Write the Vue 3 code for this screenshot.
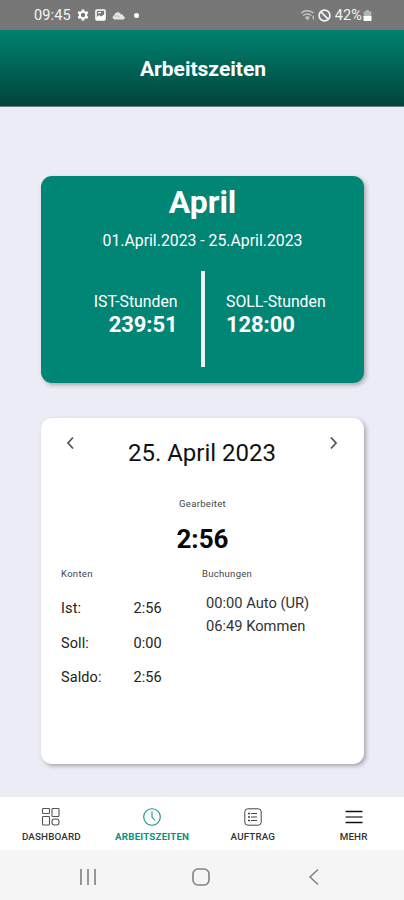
<script setup>
const accounts = [
  { label: 'Ist:', value: '2:56' },
  { label: 'Soll:', value: '0:00' },
  { label: 'Saldo:', value: '2:56' },
]
const bookings = ['00:00 Auto (UR)', '06:49 Kommen']
</script>

<template>
  <div class="screen">
    <div class="status">
      <div class="status-left">
        <span class="time">09:45</span>
        <svg class="gear" width="12" height="12" viewBox="0 0 24 24" fill="#fff"><path fill-rule="evenodd" d="M9.5 1h5l.6 3.2 2 1.2 3.1-1.2 2.5 4.3-2.5 2.1v2.8l2.5 2.1-2.5 4.3-3.1-1.2-2 1.2-.6 3.2h-5l-.6-3.2-2-1.2-3.1 1.2-2.5-4.3 2.5-2.1v-2.8L1.300 8.500l2.500-4.300 3.100 1.200 2-1.200zM12 7.600a4.400 4.400 0 1 0 0 8.800 4.400 4.400 0 0 0 0-8.800z" /></svg>
        <svg class="photo" width="11" height="12" viewBox="0 0 11 12"><rect x="1" y="1" width="9" height="10" rx="1" fill="none" stroke="#fff" stroke-width="1.600" /><path d="M1 9l3-3 2 1.500L10 5v6H1z" fill="#fff" /><path d="M3 3.700h3" stroke="#fff" stroke-width="1.200" /></svg>
        <svg class="cloud" width="13" height="9" viewBox="0 0 13 9"><path d="M3 8.500C.2 8.500-.2 5 2.200 4.500 2.500 1 7.200-.2 8.900 3.300c1.500-.3 2.300.5 2.400 1.600 2.100.3 1.900 3.600-.3 3.600z" fill="#e3e3e3" /><path d="M2.500 5.500c2-1.200 3.500-.6 5 .6" fill="none" stroke="#aaa" stroke-width=".7" /></svg>
        <span class="dot"></span>
      </div>
      <div class="status-right">
        <svg width="16" height="13" viewBox="0 0 16 13"><g fill="none" stroke="#c5c5c5" stroke-width="1.400"><path d="M1 4Q7 -.5 13.500 4M3 6.500q4.300-3 8.500 0M5.300 8.700q2-1.500 4 0" /></g><path d="M5 8.500h5l-2.500 3zM12 8l2-2v6z" fill="#bbb" /></svg>
        <svg class="block" width="13" height="13" viewBox="0 0 13 13" fill="none" stroke="#f4f4f4" stroke-width="1.700"><circle cx="6.500" cy="6.500" r="5.400" /><path d="M2.900 2.900l7.200 7.200" /></svg>
        <span class="percent">42%</span>
        <svg class="battery" width="9" height="13" viewBox="0 0 9 13"><path d="M3 1h3v1.500h2.300V6H.7V2.500H3z" fill="#b5b5b5" /><rect x=".5" y="6.500" width="8" height="5.500" rx=".7" fill="#fff" /></svg>
      </div>
    </div>

    <header class="header"><span class="header-title">Arbeitszeiten</span></header>

    <main class="main">
      <section class="card month">
        <h1 class="month-name"><span>April</span></h1>
        <p class="range"><span>01.April.2023 - 25.April.2023</span></p>
        <div class="totals">
          <div class="total actual">
            <span class="total-label">IST-Stunden</span>
            <strong class="total-value">239:51</strong>
          </div>
          <div class="divider"></div>
          <div class="total target">
            <span class="total-label">SOLL-Stunden</span>
            <strong class="total-value">128:00</strong>
          </div>
        </div>
      </section>

      <section class="card day">
        <div class="day-head">
          <svg width="11" height="16" viewBox="0 0 11 16" fill="none" stroke="#555" stroke-width="1.800"><path d="M8 2.500L3 8l5 5.500" /></svg>
          <h2 class="date">25. April 2023</h2>
          <svg width="11" height="16" viewBox="0 0 11 16" fill="none" stroke="#555" stroke-width="1.800"><path d="M3 2.500L8 8l-5 5.500" /></svg>
        </div>
        <div class="worked-label small">Gearbeitet</div>
        <div class="worked">2:56</div>
        <div class="details">
          <div class="accounts">
            <div class="small">Konten</div>
            <div v-for="a in accounts" :key="a.label" class="account">
              <span class="account-label">{{ a.label }}</span><span>{{ a.value }}</span>
            </div>
          </div>
          <div class="bookings">
            <div class="small">Buchungen</div>
            <div class="booking-list">
              <div v-for="b in bookings" :key="b" class="booking">{{ b }}</div>
            </div>
          </div>
        </div>
      </section>
    </main>

    <nav class="tabs">
      <div class="tab">
        <svg width="20" height="20" viewBox="0 0 20 20" fill="none" stroke="#555" stroke-width="1.100"><rect x="1.500" y="1.500" width="7" height="5" rx=".8" /><rect x="11" y="1.500" width="7" height="8" rx=".8" /><rect x="1.500" y="9.500" width="7" height="8.500" rx=".8" /><rect x="11" y="12" width="7" height="6" rx="2.500" /></svg>
        <span>DASHBOARD</span>
      </div>
      <div class="tab active">
        <svg width="20" height="20" viewBox="0 0 20 20" fill="none" stroke="#16967f" stroke-width="1.100"><circle cx="10" cy="10" r="8.300" /><path d="M10 4.500V10l3 3.500" /></svg>
        <span>ARBEITSZEITEN</span>
      </div>
      <div class="tab">
        <svg width="20" height="20" viewBox="0 0 20 20" fill="none" stroke="#444" stroke-width="1"><rect x="1.800" y="1.800" width="16.400" height="16.400" rx="3" /><path d="M8 6.500h6M8 10h6M8 13.500h6" /><path d="M5 6.500h2M5 10h2M5 13.500h2" stroke-width="1.700" /></svg>
        <span>AUFTRAG</span>
      </div>
      <div class="tab">
        <svg width="20" height="20" viewBox="0 0 20 20" stroke="#111" stroke-width="1.600"><path d="M1.500 4.500h17M1.500 15.500h17" /><path d="M1.500 10h17" stroke="#555" /></svg>
        <span>MEHR</span>
      </div>
    </nav>

    <div class="system">
      <svg width="18" height="18" viewBox="0 0 18 18" stroke="#929292" stroke-width="1.900"><path d="M2 1v16M9 1v16M16 1v16" /></svg>
      <svg width="18" height="18" viewBox="0 0 18 18" fill="none" stroke="#818181" stroke-width="1.600"><rect x="1" y="1" width="16" height="16" rx="5" /></svg>
      <svg width="18" height="18" viewBox="0 0 18 18" fill="none" stroke="#808080" stroke-width="1.500"><path d="M13 1.500L5 9l8 7.500" /></svg>
    </div>
  </div>
</template>

<style>
body { margin: 0; }
</style>

<style scoped>
.screen { width: 404px; height: 900px; display: flex; flex-direction: column; overflow: hidden; font-family: Roboto, "Liberation Sans", sans-serif; background: #ececf6; color: #222; }
.screen * { box-sizing: border-box; }
svg { display: block; flex: none; }
span { white-space: nowrap; }
.status { height: 30px; flex: none; display: flex; justify-content: space-between; align-items: center; padding: 0 32px 0 34px; background: #777; color: #f5f5f5; font-size: 14.500px; }
.status-left, .status-right { display: flex; align-items: center; }
.time { letter-spacing: .15px; }
.gear { margin-left: 6px; }
.photo { margin-left: 6px; }
.cloud { margin-left: 6px; }
.dot { width: 5px; height: 5px; margin-left: 9px; border-radius: 50%; background: #fff; }
.block { margin-left: 2px; }
.percent { margin-left: 4px; letter-spacing: .1px; }
.battery { margin-left: 1px; }
.header { height: 77px; flex: none; display: flex; justify-content: center; align-items: center; padding: 2px 0 0 2px; background: linear-gradient(#008270, #01443b); border-bottom: 1px solid #617f7d; color: #fff; font-size: 21px; font-weight: 700; }
.main { height: 690px; flex: none; display: flex; flex-direction: column; gap: 35px; padding: 69px 40px 0 41px; }
.card { border-radius: 11px; box-shadow: 2px 2px 4px rgba(0, 0, 0, .3); }
h1, h2, p { margin: 0; }
.month { height: 207px; flex: none; background: #018575; color: #fff; }
.month-name { height: 52px; line-height: 52px; font-size: 32px; text-align: center; }
.range { height: 26px; line-height: 26px; font-size: 15.800px; text-align: center; }
.totals { display: grid; grid-template-columns: 1fr 4px 1fr; margin-top: 17px; height: 96px; }
.divider { background: #edf5f4; }
.total { display: flex; flex-direction: column; padding-top: 20px; }
.actual { align-items: flex-end; padding-right: 23px; }
.target { padding-left: 21.500px; }
.total-label { font-size: 15.800px; line-height: 21px; }
.total-value { font-size: 22px; line-height: 26px; letter-spacing: -.1px; }
.day { height: 346px; flex: none; background: #fff; }
.day-head { display: flex; justify-content: space-between; padding: 17px 25px 0 24px; height: 78px; }
.date { font-size: 24px; line-height: 36px; font-weight: 400; color: #111; }
.small { font-size: 9.500px; line-height: 16px; letter-spacing: .3px; color: #444; }
.worked-label { text-align: center; }
.worked { height: 54px; line-height: 54px; font-size: 26px; font-weight: 700; text-align: center; color: #080808; }
.details { display: grid; grid-template-columns: 141px 1fr; padding-left: 20px; }
.account { display: flex; height: 34.500px; align-items: center; font-size: 14.500px; letter-spacing: .1px; }
.small + .account { margin-top: 9.500px; }
.account-label { width: 72.500px; }
.booking-list { padding: 10px 0 0 4px; }
.booking { font-size: 14.700px; line-height: 23px; color: #333; }
.tabs { height: 53px; flex: none; display: grid; grid-template-columns: repeat(4, 1fr); padding-left: 1px; background: #fff; }
.tab { display: flex; flex-direction: column; align-items: center; padding-top: 10px; font-size: 9.800px; line-height: 12px; font-weight: 500; letter-spacing: .15px; color: #333; }
.tab span { margin-top: 4px; }
.active { color: #0b917b; font-weight: 700; }
.system { height: 50px; flex: none; display: flex; justify-content: space-between; align-items: center; padding: 3px 81px 0 79px; background: #f5f5f5; }
</style>
